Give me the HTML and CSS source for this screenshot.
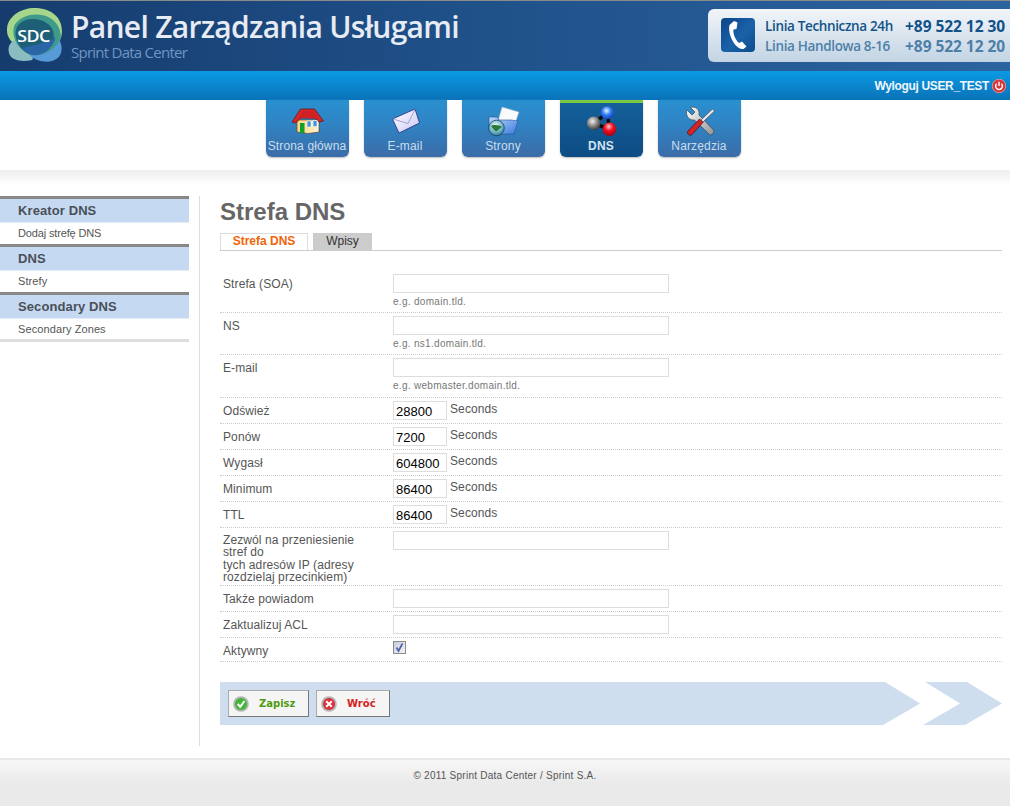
FILE: index.html
```html
<!DOCTYPE html>
<html lang="pl">
<head>
<meta charset="utf-8">
<title>Panel Zarządzania Usługami</title>
<link rel="stylesheet" href="styles.css">
</head>
<body>
<header class="top">
  <svg class="logo" viewBox="0 0 56 56" preserveAspectRatio="none">
    <path d="M3 20C5 8 18 0 31 1C45 2 55 10 55 24C55 32 52 36 48 38L12 38C5 34 2 28 3 20Z" fill="#a5d68c"/>
    <path d="M14 32C5 34 3 40 5 47C8 54 17 55 27 53L30 34Z" fill="#8bbcc0"/>
    <path d="M24 48C32 56 46 57 52 50C56 45 55 38 53 34L30 36Z" fill="#579ad8"/>
    <path d="M10 18C18 6 34 6 42 10C50 14 54 22 54 30C50 42 38 50 26 48C14 44 6 30 10 18Z" fill="#3f9a8a"/>
    <path d="M11 26C11 14 24 10 34 13C44 16 50 24 46 36C42 46 30 50 22 46C15 42 11 34 11 26Z" fill="#1e5f78"/>
    <path d="M17 41C26 38 38 38 49 30C47 40 38 50 27 48C23 47 20 44 17 41Z" fill="#2a65a8"/>
    <text x="28" y="35" class="logo-text" text-anchor="middle">SDC</text>
  </svg>
  <div class="brand">
    <div class="brand-title">Panel Zarządzania Usługami</div>
    <div class="brand-sub">Sprint Data Center</div>
  </div>
  <div class="contact">
    <svg class="phone" viewBox="0 0 34 34" width="34" height="34">
      <defs><linearGradient id="pg" x1="0" y1="0" x2="1" y2="1"><stop offset="0" stop-color="#0e4488"/><stop offset=".55" stop-color="#1a62a8"/><stop offset="1" stop-color="#0d4c8e"/></linearGradient></defs>
      <rect width="34" height="34" rx="4" fill="url(#pg)"/>
      <path d="M13 3L16.500 4.500L15.500 11L12.500 11.500C11.800 16 14.500 22 18 25L21 23.500L25.500 28.500L22.500 31C19 31.500 15 28.500 12 23.500C8.500 17.500 7.500 11 8.500 7Z" fill="#fff"/>
    </svg>
    <div class="contact-grid">
      <span class="c-name strong">Linia Techniczna 24h</span><span class="c-num strong">+89 522 12 30</span>
      <span class="c-name soft">Linia Handlowa 8-16</span><span class="c-num soft">+89 522 12 20</span>
    </div>
  </div>
</header>
<div class="userbar">
  <span class="logout">Wyloguj USER_TEST</span>
  <svg viewBox="0 0 14 14" width="14" height="14">
    <circle cx="7" cy="7" r="6.800" fill="#d8353a"/><circle cx="7" cy="7" r="6.800" fill="none" stroke="#f4b0a8" stroke-width=".7"/>
    <path d="M4.600 4.700A3.400 3.400 0 1 0 9.400 4.700" fill="none" stroke="#fff" stroke-width="1.400"/><path d="M7 2.800V7" stroke="#fff" stroke-width="1.400"/>
  </svg>
</div>
<nav class="nav">
  <a class="tab">
    <svg class="tab-icon" viewBox="0 0 32 32">
      <defs><linearGradient id="wall" x1="0" y1="0" x2="1" y2="0"><stop offset="0" stop-color="#ffd27a"/><stop offset="1" stop-color="#fff2d4"/></linearGradient></defs>
      <path d="M5 14H27V26L16 27.500L5 26Z" fill="url(#wall)" stroke="#5a3a1a" stroke-width=".6"/>
      <path d="M0 16L8.500 3H22.500L31.500 15L27 16L23 12H9L3.500 17Z" fill="#d8252a" stroke="#5e1010" stroke-width=".7"/>
      <path d="M6 14L11 5H22L27 13L10 12Z" fill="#cf2024"/>
      <rect x="8" y="17" width="4.500" height="10" fill="#12a02c"/>
      <rect x="15" y="15" width="4" height="6" fill="#3f96e0" stroke="#fff" stroke-width=".6"/>
      <rect x="21" y="14.500" width="4" height="6" fill="#3f96e0" stroke="#fff" stroke-width=".6"/>
    </svg>
    <span>Strona główna</span>
  </a>
  <a class="tab">
    <svg class="tab-icon" viewBox="0 0 32 32">
      <defs><linearGradient id="env" x1="0" y1="0" x2="1" y2="1"><stop offset="0" stop-color="#fff"/><stop offset="1" stop-color="#c9c8f4"/></linearGradient></defs>
      <path d="M2.500 13L25 3L29.500 17L9 27Z" fill="url(#env)" stroke="#2c2a80" stroke-width=".8"/>
      <path d="M3 13L18 17.500L25 3.500" fill="none" stroke="#9a98d8" stroke-width=".9"/>
    </svg>
    <span>E-mail</span>
  </a>
  <a class="tab">
    <svg class="tab-icon" viewBox="0 0 32 32">
      <defs>
        <linearGradient id="fold" x1="0" y1="0" x2="1" y2="1"><stop offset="0" stop-color="#bcd8f8"/><stop offset="1" stop-color="#3a7ce0"/></linearGradient>
        <radialGradient id="globe" cx=".45" cy=".35" r=".75"><stop offset="0" stop-color="#f4fbf8"/><stop offset=".55" stop-color="#70b8c8"/><stop offset="1" stop-color="#1c5a80"/></radialGradient>
      </defs>
      <path d="M14 1L31 6L26 21L10 15Z" fill="#f8fafc" stroke="#8ea8c8" stroke-width=".5"/>
      <path d="M1 11H9L11 14H23L30 15L26 28H6L1 22Z" fill="url(#fold)" stroke="#234f9c" stroke-width=".6"/>
      <circle cx="8.500" cy="22" r="7.800" fill="url(#globe)" stroke="#103a58" stroke-width=".7"/>
      <path d="M3 20C6 18 12 19 14 21C11 22.500 10 25 8 25.500C6 24.500 5 22.500 3 20Z" fill="#2c7a3a"/>
    </svg>
    <span>Strony</span>
  </a>
  <a class="tab tab-active">
    <svg class="tab-icon" viewBox="0 0 32 32">
      <defs>
        <radialGradient id="bg" cx=".4" cy=".35" r=".7"><stop offset="0" stop-color="#f0f0f0"/><stop offset=".6" stop-color="#777"/><stop offset="1" stop-color="#333"/></radialGradient>
        <radialGradient id="bb" cx=".45" cy=".35" r=".7"><stop offset="0" stop-color="#e8f4ff"/><stop offset=".5" stop-color="#2a78f0"/><stop offset="1" stop-color="#1038b8"/></radialGradient>
        <radialGradient id="br" cx=".45" cy=".3" r=".7"><stop offset="0" stop-color="#ffc8c8"/><stop offset=".45" stop-color="#f41020"/><stop offset="1" stop-color="#a00010"/></radialGradient>
      </defs>
      <path d="M8 17.300L21.200 6.700M8 17.300L23.500 23.300M21.200 6.700L23.500 23.300" stroke="#0a0a0a" stroke-width="3.400" fill="none"/>
      <circle cx="7.800" cy="17.300" r="6.800" fill="url(#bg)"/>
      <circle cx="21.200" cy="6.700" r="6.500" fill="url(#bb)"/>
      <circle cx="23.500" cy="23.300" r="6.800" fill="url(#br)"/>
    </svg>
    <span>DNS</span>
  </a>
  <a class="tab">
    <svg class="tab-icon" viewBox="0 0 32 32">
      <defs><linearGradient id="steel" x1="0" y1="0" x2="1" y2="1"><stop offset="0" stop-color="#fff"/><stop offset="1" stop-color="#8e949a"/></linearGradient></defs>
      <path d="M3 4L8 9L11 6L6.500 1.500C11 0 16 3 15 9L29.500 24C31 26 27.500 30 25.500 28.500L10.500 14C5 15 1 9 3 4Z" fill="url(#steel)" stroke="#444" stroke-width=".7"/>
      <path d="M28.500 3L30.500 5L19 16L17 14Z" fill="#e4e8ec" stroke="#333" stroke-width=".6"/>
      <path d="M15.500 13L19 16.500L8 28.500C6 30.500 2 27.500 4 25Z" fill="#d4242a" stroke="#4a0808" stroke-width=".7"/>
    </svg>
    <span>Narzędzia</span>
  </a>
</nav>
<main class="main">
  <aside class="sidebar">
    <h3 class="side-head">Kreator DNS</h3>
    <a class="side-item side-tight">Dodaj strefę DNS</a>
    <h3 class="side-head">DNS</h3>
    <a class="side-item">Strefy</a>
    <h3 class="side-head">Secondary DNS</h3>
    <a class="side-item side-last">Secondary Zones</a>
  </aside>
  <section class="content">
    <h1 class="title">Strefa DNS</h1>
    <div class="tabs">
      <span class="subtab subtab-on">Strefa DNS</span>
      <span class="subtab subtab-off">Wpisy</span>
    </div>
    <form class="form">
      <div class="row row-hint"><label class="lab">Strefa (SOA)</label><div><input class="inp" type="text"><div class="hint">e.g. domain.tld.</div></div></div>
      <div class="row row-hint"><label class="lab">NS</label><div><input class="inp" type="text"><div class="hint">e.g. ns1.domain.tld.</div></div></div>
      <div class="row row-hint row-hint-tall"><label class="lab">E-mail</label><div><input class="inp" type="text"><div class="hint">e.g. webmaster.domain.tld.</div></div></div>
      <div class="row"><label class="lab">Odśwież</label><div class="num-field"><input class="inp inp-num" type="text" value="28800"><span class="unit">Seconds</span></div></div>
      <div class="row"><label class="lab">Ponów</label><div class="num-field"><input class="inp inp-num" type="text" value="7200"><span class="unit">Seconds</span></div></div>
      <div class="row"><label class="lab">Wygasł</label><div class="num-field"><input class="inp inp-num" type="text" value="604800"><span class="unit">Seconds</span></div></div>
      <div class="row"><label class="lab">Minimum</label><div class="num-field"><input class="inp inp-num" type="text" value="86400"><span class="unit">Seconds</span></div></div>
      <div class="row"><label class="lab">TTL</label><div class="num-field"><input class="inp inp-num" type="text" value="86400"><span class="unit">Seconds</span></div></div>
      <div class="row row-multi"><label class="lab lab-multi">Zezwól na przeniesienie<br>stref do<br>tych adresów IP (adresy<br>rozdzielaj przecinkiem)</label><div><input class="inp" type="text"></div></div>
      <div class="row"><label class="lab">Także powiadom</label><div><input class="inp" type="text"></div></div>
      <div class="row"><label class="lab">Zaktualizuj ACL</label><div><input class="inp" type="text"></div></div>
      <div class="row row-check"><label class="lab">Aktywny</label><div>
        <span class="check"><svg viewBox="0 0 11 11" width="11" height="11"><path d="M2.500 5.500L4.500 9L8.500 1.500" fill="none" stroke="#4a5fa8" stroke-width="1.600"/></svg></span>
      </div></div>
      <div class="actions">
        <div class="bar">
          <button class="btn btn-save" type="button">
            <svg viewBox="0 0 16 16" width="16" height="16"><circle cx="8" cy="8" r="7.800" fill="#b4b4b4"/><circle cx="8" cy="8" r="6" fill="#42b53a"/><path d="M4.800 8L7.200 10.800L11.500 5" fill="none" stroke="#fff" stroke-width="2"/></svg>
            <span>Zapisz</span>
          </button>
          <button class="btn btn-back" type="button">
            <svg viewBox="0 0 16 16" width="16" height="16"><circle cx="8" cy="8" r="7.800" fill="#b4b4b4"/><circle cx="8" cy="8" r="6" fill="#d8323c"/><path d="M5.200 5.200L10.800 10.800M10.800 5.200L5.200 10.800" stroke="#fff" stroke-width="2"/></svg>
            <span>Wróć</span>
          </button>
        </div>
        <div class="chevron"></div>
      </div>
    </form>
  </section>
</main>
<footer class="footer">© 2011 Sprint Data Center / Sprint S.A.</footer>
</body>
</html>
```
FILE: styles.css
```css
* { box-sizing: border-box; }
html, body { margin: 0; padding: 0; }
body { width: 1010px; height: 806px; overflow: hidden; background: #fff; font-family: "Liberation Sans", Arial, sans-serif; color: #555; display: flex; flex-direction: column; }

.top { height: 71px; flex: none; border-top: 1px solid #8a8a8a; background: linear-gradient(90deg, #163c6e 0%, #1f5088 45%, #2c64a0 100%); display: flex; position: relative; overflow: hidden; }
.logo { margin: 6px 0 0 4px; width: 59px; height: 56px; flex: none; }
.logo-text { font-family: "Open Sans", sans-serif; font-size: 17px; font-weight: 600; fill: #fff; letter-spacing: -.6px; }
.brand { margin-left: 8px; padding-top: 9px; width: 637px; flex: none; }
.brand-title { font-family: "Open Sans", sans-serif; font-size: 30px; font-weight: 600; line-height: 34px; color: #e6ebf4; letter-spacing: -.7px; white-space: nowrap; }
.brand-sub { font-family: "Open Sans", sans-serif; font-size: 15px; font-weight: 500; line-height: 14px; color: #6f96c2; margin-top: 1px; letter-spacing: -.75px; white-space: nowrap; }
.contact { margin-top: 8px; height: 53px; width: 310px; flex: none; border-radius: 6px 0 0 6px; background: linear-gradient(180deg, #f2f5f9, #c2d4e4); padding: 9px 0 0 13px; display: flex; }
.phone { flex: none; }
.contact-grid { margin: -2px 0 0 10px; display: grid; grid-template-columns: 140px auto; grid-auto-rows: 20px; align-items: center; white-space: nowrap; font-family: "Open Sans", sans-serif; }
.c-name { font-size: 13.500px; font-weight: 600; letter-spacing: -.35px; }
.c-num { font-size: 15.500px; font-weight: 700; letter-spacing: -.05px; line-height: 20px; }
.strong { color: #125288; }
.soft { color: #4d7fa8; }

.userbar { height: 29px; flex: none; background: linear-gradient(180deg, #0a9ae4, #0a72b8); display: flex; justify-content: flex-end; align-items: center; padding: 0 4px 0 0; gap: 3px; }
.logout { color: #eef6fc; font-size: 12px; font-weight: 700; letter-spacing: -.35px; }

.nav { height: 70px; flex: none; display: flex; gap: 15px; padding-left: 266px; background: #fff; }
.tab { width: 83px; height: 57px; display: flex; flex-direction: column; align-items: center; background: linear-gradient(180deg, #2a90d0 0%, #2f84c4 40%, #3b6ca8 100%); border-radius: 0 0 6px 6px; box-shadow: 0 1px 2px #bbb; color: #c8deee; font-size: 12px; }
.tab-icon { width: 32px; height: 32px; margin-top: 6px; flex: none; }
.tab span { line-height: 14px; margin-top: 1px; padding-right: 1px; white-space: nowrap; letter-spacing: .15px; }
.tab-active { border-top: 3px solid #7ac943; background: linear-gradient(180deg, #14609a, #0e4c84); color: #d4e4f0; font-weight: 700; }
.tab-active .tab-icon { margin-top: 3px; }

.main { flex: 1; display: flex; padding-top: 26px; padding-bottom: 12px; background: linear-gradient(180deg, #efefef 0, #fff 16px); }
.sidebar { width: 189px; flex: none; margin-right: 10px; }
.side-head { margin: 0; height: 26px; border-top: 3px solid #888; background: #c5daf2; color: #4a4f58; font-size: 13px; font-weight: 700; line-height: 24px; padding-left: 18px; letter-spacing: .1px; }
.side-item { display: block; height: 22px; border-top: 1px solid #e4edf8; padding-left: 18px; font-size: 11px; line-height: 20px; color: #555; letter-spacing: .1px; }
.side-tight { letter-spacing: -.15px; }
.side-last { height: 24px; border-bottom: 3px solid #ddd; }

.content { flex: 1; border-left: 1px solid #ddd; padding: 0 8px 0 20px; }
.title { margin: 0; font-size: 24px; line-height: 32px; font-weight: 700; color: #666; }
.tabs { margin-top: 5px; height: 18px; border-bottom: 1px solid #ccc; display: flex; gap: 5px; }
.subtab { height: 17px; font-size: 12px; line-height: 15px; text-align: center; }
.subtab-on { width: 88px; border: 1px solid #ddd; border-bottom: 0; color: #f2640a; font-weight: 700; }
.subtab-off { width: 59px; background: #ccc; color: #333; line-height: 17px; }

.form { margin-top: 20px; }
.row { display: grid; grid-template-columns: 173px 1fr; height: 26px; padding-top: 3px; border-bottom: 1px dotted #ccc; }
.row-hint { height: 42px; }
.row-hint-tall { height: 43px; }
.row-multi { height: 58px; }
.row-check { height: 24px; }
.lab { padding: 1px 0 0 3px; font-size: 12px; line-height: 19px; color: #555; letter-spacing: .1px; }
.lab-multi { line-height: 12.300px; padding-top: 3px; }
.inp { display: block; width: 276px; height: 19px; border: 1px solid #ddd; background: #fff; padding: 0 2px; margin: 0; font-family: "Liberation Sans", Arial, sans-serif; font-size: 13px; color: #000; outline: 0; }
.inp-num { width: 54px; padding-top: 2px; }
.num-field { display: flex; gap: 3px; }
.unit { font-size: 12px; line-height: 16px; color: #555; letter-spacing: .1px; }
.hint { font-size: 10px; line-height: 12px; margin-top: 3px; color: #777; letter-spacing: .3px; }
.check { display: flex; align-items: center; justify-content: center; width: 13px; height: 13px; border: 1px solid #8a8a8a; background: linear-gradient(135deg, #c8ccd8, #f4f4f4); }

.actions { margin-top: 20px; height: 43px; display: flex; }
.bar { width: 700px; height: 43px; flex: none; background: #cfdeee; clip-path: polygon(0 0, 665px 0, 700px 50%, 663px 100%, 0 100%); display: flex; gap: 7px; padding: 8px 0 0 8px; }
.chevron { width: 79px; height: 43px; margin-left: 3px; flex: none; background: #cfdeee; clip-path: polygon(2px 0, 44px 0, 79px 50%, 42px 100%, 0 100%, 37px 50%); }
.btn { height: 27px; border: 1px solid #aaa; border-right-color: #777; border-bottom-color: #777; background: #f5f5f5; padding: 0 0 0 4px; display: flex; align-items: center; font-family: "DejaVu Sans", Verdana, sans-serif; font-size: 10px; font-weight: 700; }
.btn-save { width: 81px; color: #4f9a10; gap: 10px; }
.btn-back { width: 74px; color: #d4201c; gap: 10px; }

.footer { height: 48px; flex: none; border-top: 2px solid #e8e8e8; background: linear-gradient(180deg, #f7f7f7, #eaeaea 50%); text-align: center; font-size: 10px; line-height: 32px; color: #555; letter-spacing: .25px; }
```
